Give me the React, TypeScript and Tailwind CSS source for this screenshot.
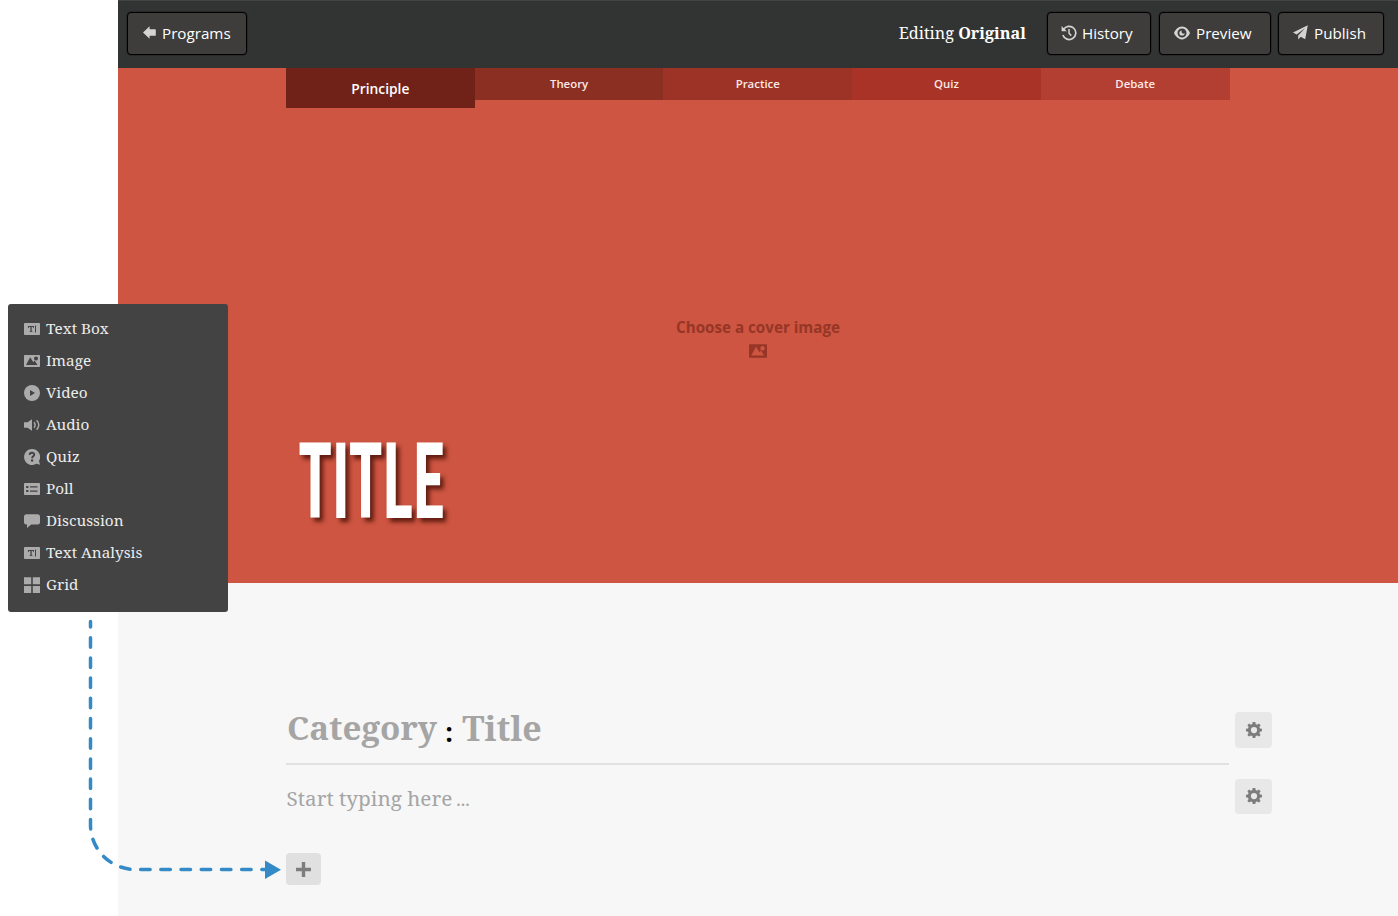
import type { ReactNode } from "react";

const sans = "font-['Open_Sans','Noto_Sans',sans-serif]";
const serif = "font-['Noto_Serif','DejaVu_Serif',serif]";

function Icon({ children, className, box = "0 0 16 16" }: { children: ReactNode; className: string; box?: string }) {
  return (
    <svg viewBox={box} className={`shrink-0 ${className}`} fill="currentColor" aria-hidden="true">
      {children}
    </svg>
  );
}

const picturePath =
  "M.8 2h14.4a.8.8 0 0 1 .8.8v10.4a.8.8 0 0 1-.8.8H.8a.8.8 0 0 1-.8-.8V2.8A.8.8 0 0 1 .8 2zM2 12h11.500L10.600 7.600 9.300 9.200 6.200 4.200zM12 3.500a2 2 0 1 0 0 4 2 2 0 0 0 0-4z";

const TextBoxIcon = () => (
  <Icon className="h-4 w-4">
    <rect y="2" width="16" height="12" rx="0.8" />
    <path d="M4 5h6v2H9.2V6H7.7v4.300h.8V11H5.600v-.7h.8V6H4.900v1H4zM11 4.600h1v6.800h-1z" fill="#434343" />
  </Icon>
);
const ImageIcon = () => (
  <Icon className="h-4 w-4">
    <path fillRule="evenodd" d={picturePath} />
  </Icon>
);
const VideoIcon = () => (
  <Icon className="h-4 w-4">
    <circle cx="8" cy="8" r="8" />
    <path d="M6 5v6l5-3z" fill="#434343" />
  </Icon>
);
const AudioIcon = () => (
  <Icon className="h-4 w-4">
    <path d="M0 5.200h3.500L8 2.300v11.400L3.500 10.800H0z" />
    <path d="M10 5.300q2.200 2.700 0 5.400M12.600 3.300q4.400 4.700 0 9.400" fill="none" stroke="currentColor" strokeWidth="1.400" />
  </Icon>
);
const QuizIcon = () => (
  <Icon className="h-4 w-4">
    <path d="M8 0a8 8 0 1 0 4.300 14.800L16 15.700l-1-3.700A8 8 0 0 0 8 0z" />
    <path d="M5.700 5.900C5.600 3.100 10.400 3 10.300 5.600 10.300 7.400 8.100 7.300 8.100 9.300" fill="none" stroke="#434343" strokeWidth="1.900" />
    <circle cx="8.100" cy="11.500" r="1.200" fill="#434343" />
  </Icon>
);
const PollIcon = () => (
  <Icon className="h-4 w-4">
    <rect y="2" width="16" height="12" rx="0.8" />
    <path d="M2.200 4.900h2.200V7H2.200zM2.200 9h2.200v2.100H2.200zM6 5.300h7.500v1.300H6zM6 9.400h7.500v1.300H6z" fill="#434343" />
  </Icon>
);
const DiscussionIcon = () => (
  <Icon className="h-4 w-4">
    <path d="M2.500 1.200h11A2.500 2.500 0 0 1 16 3.700v5.400a2.500 2.500 0 0 1-2.500 2.500H7.200L3 15v-3.400h-.5A2.500 2.500 0 0 1 0 9.100V3.700a2.500 2.500 0 0 1 2.500-2.500z" />
  </Icon>
);
const GridIcon = () => (
  <Icon className="h-4 w-4">
    <path d="M0 .3h7.200v7H0zM8.800.3H16v7H8.800zM0 9h7.200v7H0zM8.800 9H16v7H8.800z" />
  </Icon>
);

const BackIcon = () => (
  <Icon className="h-[13px] w-[13px]" box="0 0 13 13">
    <path d="M0 6.500 6.600.2v3H12.200a.6.6 0 0 1 .6.6v5.400a.6.6 0 0 1-.6.6H6.600v3z" />
  </Icon>
);
const HistoryIcon = () => (
  <Icon className="h-4 w-4">
    <path d="M2.500 4.600a6.600 6.600 0 1 1-.6 5.400" fill="none" stroke="currentColor" strokeWidth="1.700" />
    <path d="M.6 1v5.200h5.200z" />
    <path d="M8 4v4.300l2.300 2.300" fill="none" stroke="currentColor" strokeWidth="1.500" />
  </Icon>
);
const EyeIcon = () => (
  <Icon className="h-4 w-4">
    <path
      fillRule="evenodd"
      d="M8 1.600C3.500 1.600.6 6.400 0 8c.6 1.600 3.500 6.400 8 6.400S15.400 9.600 16 8C15.400 6.400 12.500 1.600 8 1.600zM8 3.500a4.500 4.500 0 1 1 0 9 4.500 4.500 0 0 1 0-9zM8 5.400A2.600 2.600 0 1 0 10.600 8 1.500 1.500 0 0 1 8 5.400z"
    />
  </Icon>
);
const PlaneIcon = () => (
  <Icon className="h-[15px] w-[15px]" box="0 0 15 15">
    <path d="M14.800.2 0 7.600l3.600 2L12 3.200 5.200 10.500v4l2.500-2.700 4.500 2.500z" />
  </Icon>
);
const GearIcon = () => (
  <Icon className="h-4 w-4">
    <path
      fillRule="evenodd"
      d="M6.700 0h2.600l.4 2.100 1.400.6L12.900 1.500l1.700 1.700-1.200 1.800.6 1.500 2 .3v2.500l-2 .4-.6 1.400 1.200 1.800-1.700 1.700-1.800-1.200-1.400.6-.4 2H6.700l-.4-2-1.400-.6-1.800 1.200-1.700-1.700 1.200-1.800-.6-1.400-2-.4V6.800l2-.3.600-1.500L1.400 3.200l1.700-1.700 1.800 1.200 1.400-.6zM8 5a3.100 3.100 0 1 0 0 6.200A3.100 3.100 0 0 0 8 5z"
    />
  </Icon>
);

function BarButton({ icon, label, className }: { icon: ReactNode; label: string; className: string }) {
  return (
    <button
      className={`flex h-[43px] items-center rounded-[4px] border border-black bg-[#3e3d3b] text-[15.2px] leading-[22px] text-white shadow-[0_0_0_0.5px_rgba(0,0,0,0.4)] ${sans} ${className}`}
    >
      <span className="mt-[-2px] text-[#d4d4d4]">{icon}</span>
      <span className="mt-[-2px]">{label}</span>
    </button>
  );
}

const tools = [
  { label: "Text Box", icon: <TextBoxIcon /> },
  { label: "Image", icon: <ImageIcon /> },
  { label: "Video", icon: <VideoIcon /> },
  { label: "Audio", icon: <AudioIcon /> },
  { label: "Quiz", icon: <QuizIcon /> },
  { label: "Poll", icon: <PollIcon /> },
  { label: "Discussion", icon: <DiscussionIcon /> },
  { label: "Text Analysis", icon: <TextBoxIcon /> },
  { label: "Grid", icon: <GridIcon /> },
];

const tabs = [
  { label: "Theory", color: "bg-[#8b2f23]" },
  { label: "Practice", color: "bg-[#9d3327]" },
  { label: "Quiz", color: "bg-[#a93326]" },
  { label: "Debate", color: "bg-[#b33f32]" },
];

function SettingsButton({ className }: { className: string }) {
  return (
    <button aria-label="Settings" className={`flex w-[37px] shrink-0 items-center justify-center rounded-[4px] bg-[#e8e8e8] pb-px text-[#7d7d7d] ${className}`}>
      <GearIcon />
    </button>
  );
}

export default function App() {
  return (
    <div className="relative h-[916px] w-[1398px] overflow-hidden bg-white">
      <div className="ml-[118px] flex h-full flex-col bg-[#f7f7f7]">
        <header className="flex h-[68px] shrink-0 items-start border-t border-[#434544] bg-[#323433] pt-[11px] pr-[14px] pl-[9px]">
          <BarButton icon={<BackIcon />} label="Programs" className="w-[120px] gap-[6px] pl-[15px]" />
          <p className={`ml-auto pt-[10px] text-[16.2px] leading-[22px] whitespace-nowrap text-white ${serif}`}>
            Editing <strong className="font-bold">Original</strong>
          </p>
          <BarButton icon={<HistoryIcon />} label="History" className="ml-[21px] w-[104px] gap-[5px] pl-[13px]" />
          <BarButton icon={<EyeIcon />} label="Preview" className="ml-2 w-[112px] gap-[6px] pl-[14px]" />
          <BarButton icon={<PlaneIcon />} label="Publish" className="ml-[7px] w-[106px] gap-[6px] pl-[14px]" />
        </header>

        <section className="flex h-[515px] shrink-0 flex-col bg-[#cd5541] pl-[168px]">
          <nav className={`flex h-10 w-[943.5px] items-start text-center font-semibold ${sans}`}>
            <a className="h-10 flex-1 bg-[#702219] text-[13.8px] leading-[41px] text-white">Principle</a>
            {tabs.map((tab) => (
              <a key={tab.label} className={`h-8 flex-1 text-[11.4px] leading-[32px] text-[#fbe9e6] ${tab.color}`}>
                {tab.label}
              </a>
            ))}
          </nav>
          <div className={`mt-[208px] flex w-[944px] flex-col items-center text-[#963627] ${sans}`}>
            <span className="text-[15.2px] leading-[22px] font-bold">Choose a cover image</span>
            <Icon className="mt-[4px] h-[18px] w-[18px]">
              <path fillRule="evenodd" d={picturePath} />
            </Icon>
          </div>
          <h1 className="mt-[60.500px] ml-[12px] origin-left scale-x-[0.603] self-start font-['Roboto_Condensed','Roboto',sans-serif] text-[105px] leading-[124px] font-bold text-white [text-shadow:6px_4px_6px_rgba(60,10,0,0.75)]">
            TITLE
          </h1>
        </section>

        <section className={`flex flex-col pt-[129px] pl-[168px] ${serif}`}>
          <div className="flex w-[986px] items-start">
            <div className="flex h-[53px] w-[943px] items-start border-b-2 border-[#e1e1e1] pl-px text-[33.2px] leading-[32px] font-bold whitespace-pre text-[#a5a5a5]">
              <span>Category</span>
              <span className="mr-[9px] ml-[8px] pt-[4px] text-[27px] text-black">:</span>
              <span className="text-[34px]">Title</span>
            </div>
            <SettingsButton className="ml-[6px] h-9" />
          </div>
          <div className="mt-[14px] flex w-[986px] items-start">
            <p className="w-[943px] pl-[0.5px] text-[20.7px] leading-[38px] whitespace-pre text-[#a5a5a5]">
              Start typing here<span className="ml-[4px] text-[18px]">...</span>
            </p>
            <SettingsButton className="ml-[6px] h-[35px]" />
          </div>
          <button aria-label="Add block" className="mt-[35px] flex h-8 w-[35px] items-center justify-center rounded-[4px] bg-[#e0e0e0] text-[#7d7d7d]">
            <Icon className="h-[15px] w-[15px]" box="0 0 15 15">
              <path d="M5.800 0h3.400v5.800H15v3.400H9.200V15H5.800V9.200H0V5.800h5.800z" />
            </Icon>
          </button>
        </section>
      </div>

      <aside className={`absolute top-[304px] left-[8px] flex h-[308px] w-[220px] flex-col rounded-[3px] bg-[#434343] pt-[9px] pl-4 text-[15.3px] text-[#ececec] ${serif}`}>
        {tools.map((tool) => (
          <div key={tool.label} className="flex h-8 items-center gap-[6px]">
            <span className="text-[#ababab]">{tool.icon}</span>
            <span className="mt-[-2px] leading-[30px]">{tool.label}</span>
          </div>
        ))}
      </aside>

      <svg className="absolute top-[616px] left-[80px] h-[270px] w-[210px]" viewBox="80 616 210 270" fill="none" aria-hidden="true">
        <path
          d="M90.500 621.500V825A45 44.500 0 0 0 135.500 869.500H272"
          stroke="#338ac7"
          strokeWidth="3.500"
          strokeLinecap="round"
          strokeDasharray="9.500 10.700"
          strokeDashoffset="4"
        />
        <path d="M265 860.500v18.500l16-9.200z" fill="#338ac7" />
      </svg>
    </div>
  );
}
